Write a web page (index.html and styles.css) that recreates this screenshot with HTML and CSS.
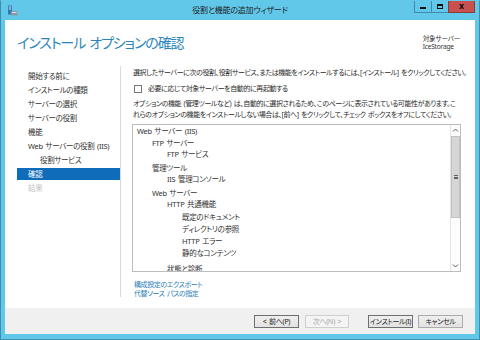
FILE: index.html
```html
<!DOCTYPE html>
<html lang="ja">
<head>
<meta charset="utf-8">
<title>役割と機能の追加ウィザード</title>
<link rel="stylesheet" href="styles.css">
</head>
<body>
<div class="window">
  <div class="titlebar">
    <div class="tb-left">
      <svg class="app-icon" width="11" height="11" viewBox="0 0 11 11">
        <rect x="1" y="0.5" width="4" height="9" fill="#2f78b8"/>
        <rect x="1.8" y="1.5" width="2.4" height="1" fill="#cfe4f5"/>
        <rect x="1.8" y="3.5" width="2.4" height="1" fill="#cfe4f5"/>
        <rect x="4" y="6" width="6.5" height="4.5" fill="#8a98a6"/>
        <rect x="5" y="7" width="4.5" height="1" fill="#dde3e8"/>
      </svg>
    </div>
    <div class="tb-title">役割と機能の追加ウィザード</div>
    <div class="tb-controls">
      <div class="ctl ctl-min"><span class="min-glyph"></span></div>
      <div class="ctl ctl-max"><span class="max-glyph"></span></div>
      <div class="ctl ctl-close"><span class="close-glyph">x</span></div>
    </div>
  </div>
  <div class="client">
    <div class="header">
      <h1 class="page-title">インストール オプションの確認</h1>
      <div class="target">
        <div>対象サーバー</div>
        <div>IceStorage</div>
      </div>
    </div>
    <div class="main">
      <nav class="nav">
        <div class="nav-item">開始する前に</div>
        <div class="nav-item">インストールの種類</div>
        <div class="nav-item">サーバーの選択</div>
        <div class="nav-item">サーバーの役割</div>
        <div class="nav-item">機能</div>
        <div class="nav-item">Web サーバーの役割 (IIS)</div>
        <div class="nav-item nav-sub">役割サービス</div>
        <div class="nav-item nav-active">確認</div>
        <div class="nav-item nav-disabled">結果</div>
      </nav>
      <section class="content">
        <p class="intro">選択したサーバーに次の役割、役割サービス、または機能をインストールするには、[インストール] をクリックしてください。</p>
        <label class="check-row"><span class="checkbox"></span><span>必要に応じて対象サーバーを自動的に再起動する</span></label>
        <p class="note">オプションの機能 (管理ツールなど) は、自動的に選択されるため、このページに表示されている可能性があります。これらのオプションの機能をインストールしない場合は、[前へ] をクリックして、チェック ボックスをオフにしてください。</p>
        <div class="listbox">
          <div class="list-items">
            <div class="li l1">Web サーバー (IIS)</div>
            <div class="li l2 first">FTP サーバー</div>
            <div class="li l3">FTP サービス</div>
            <div class="li l2">管理ツール</div>
            <div class="li l3">IIS 管理コンソール</div>
            <div class="li l2">Web サーバー</div>
            <div class="li l3">HTTP 共通機能</div>
            <div class="li l4">既定のドキュメント</div>
            <div class="li l4">ディレクトリの参照</div>
            <div class="li l4">HTTP エラー</div>
            <div class="li l4">静的なコンテンツ</div>
            <div class="li l3 last">状態と診断</div>
          </div>
          <div class="scrollbar">
            <div class="sb-arrow"><svg width="7" height="5" viewBox="0 0 7 5"><path d="M1 3.5 L3.5 1 L6 3.5" fill="none" stroke="#606060" stroke-width="1"/></svg></div>
            <div class="sb-thumb"><span class="grip"></span></div>
            <div class="sb-track"></div>
            <div class="sb-arrow"><svg width="7" height="5" viewBox="0 0 7 5"><path d="M1 1.5 L3.5 4 L6 1.5" fill="none" stroke="#606060" stroke-width="1"/></svg></div>
          </div>
        </div>
        <div class="links">
          <a class="link">構成設定のエクスポート</a>
          <a class="link">代替ソース パスの指定</a>
        </div>
      </section>
    </div>
    <div class="footer">
      <button class="btn btn-dark">&lt; 前へ(P)</button>
      <button class="btn btn-disabled">次へ(N) &gt;</button>
      <button class="btn btn-dark btn-gap">インストール(I)</button>
      <button class="btn">キャンセル</button>
    </div>
  </div>
</div>
</body>
</html>
```

FILE: styles.css
```css
* { box-sizing: border-box; }
html, body { margin: 0; padding: 0; }
body {
  width: 480px;
  height: 340px;
  overflow: hidden;
  font-family: "Noto Sans", "Noto Sans CJK JP", sans-serif;
  font-size: 7px;
  letter-spacing: -0.42px;
  word-spacing: 1px;
  color: #2b2b2b;
  font-feature-settings: "palt";
}
.window {
  width: 480px;
  height: 340px;
  background: #62c8e9;
  border: 1px solid #3e8fae;
  border-top-color: #62c8e9;
  padding: 0 4px 5px 4px;
  display: flex;
  flex-direction: column;
  overflow: hidden;
}
.titlebar {
  height: 18px;
  flex: none;
  display: grid;
  grid-template-columns: 1fr auto 1fr;
  align-items: start;
}
.tb-left { padding: 4px 0 0 2px; }
.app-icon { display: block; }
.tb-title {
  font-size: 8px;
  letter-spacing: -0.2px;
  line-height: 18px;
  color: #1b1b1b;
}
.tb-controls {
  display: flex;
  justify-content: flex-end;
  margin-right: -4px;
}
.ctl {
  height: 12px;
  display: flex;
  align-items: center;
  justify-content: center;
  border: 1px solid #3f8aa6;
  border-top: none;
}
.ctl-min { width: 17px; border-right: none; }
.ctl-max { width: 17px; border-right: none; }
.ctl-close { width: 27px; background: #c75050; border-color: #8b3a3a; margin-right: 4px; }
.min-glyph { width: 6px; height: 2px; background: #111; margin-top: 3px; }
.max-glyph { width: 6px; height: 5px; border: 1px solid #111; border-top-width: 2px; }
.close-glyph { font-family: "DejaVu Sans", sans-serif; font-weight: bold; font-size: 8px; line-height: 8px; letter-spacing: 0; color: #111; }
.client {
  flex: 1;
  min-height: 0;
  background: #ffffff;
  display: flex;
  flex-direction: column;
  margin-top: 1px;
}
.header {
  height: 41px;
  flex: none;
  display: flex;
  justify-content: space-between;
  padding: 13px 17px 0 12px;
}
.page-title {
  margin: 0;
  font-size: 14px;
  line-height: 20px;
  font-weight: normal;
  color: #2a86b9;
  letter-spacing: -1.1px;
  word-spacing: 1.5px;
}
.target {
  font-size: 6.6px;
  letter-spacing: -0.2px;
  line-height: 8px;
  color: #333;
  padding-top: 2px;
  margin-right: -2px;
}
.main {
  flex: 1;
  min-height: 0;
  display: flex;
  padding: 5px 0 11px 0;
  overflow: hidden;
}
.nav {
  width: 116px;
  flex: none;
  border-right: 1px solid #dadada;
  padding: 4px 0 0 12px;
  display: flex;
  flex-direction: column;
  gap: 2px;
  font-size: 7.5px;
  letter-spacing: -0.3px;
}
.nav-item {
  height: 12px;
  line-height: 12px;
  padding-left: 11px;
  color: #333;
  white-space: nowrap;
}
.nav-sub { padding-left: 23px; }
.nav-active { background: #0e6cbb; color: #fff; }
.nav-disabled { color: #c2c2c2; }
.content {
  flex: 1;
  padding: 2px 14px 0 11px;
  display: flex;
  flex-direction: column;
  min-width: 0;
}
.intro {
  margin: 0 0 0 1px;
  line-height: 10px;
  white-space: nowrap;
}
.check-row {
  display: flex;
  align-items: center;
  gap: 6px;
  margin: 6px 0 0 2px;
  height: 10px;
  line-height: 10px;
}
.checkbox {
  width: 8px;
  height: 8px;
  border: 1px solid #777;
  background: #fff;
}
.note {
  margin: 4px 0 0 1px;
  line-height: 11px;
}
.listbox {
  margin-top: 4px;
  height: 148px;
  flex: none;
  border: 1px solid #bcbcbc;
  display: flex;
  overflow: hidden;
}
.list-items {
  flex: 1;
  padding: 1px 0 0 4px;
  overflow: hidden;
  font-size: 7.5px;
  letter-spacing: -0.3px;
}
.li { line-height: 11.5px; white-space: nowrap; color: #333; }
.l2 { padding-left: 15px; margin-top: 2px; }
.l2.first { margin-top: 0; }
.l3 { padding-left: 30px; }
.l4 { padding-left: 45px; line-height: 12px; }
.l3.last { margin-top: 5px; }
.scrollbar {
  width: 10px;
  display: flex;
  flex-direction: column;
  background: #fdfdfd;
  border-left: 1px solid #e4e4e4;
}
.sb-arrow {
  height: 11px;
  display: flex;
  align-items: center;
  justify-content: center;
}
.sb-thumb {
  height: 82px;
  background: #d6d6d6;
  border: 1px solid #c2c2c2;
  display: flex;
  align-items: center;
  justify-content: center;
}
.grip {
  width: 4px;
  height: 4px;
  border-top: 1px solid #606060;
  border-bottom: 1px solid #606060;
  background: linear-gradient(#606060, #606060) center / 4px 1px no-repeat;
}
.sb-track { flex: 1; }
.links {
  margin-top: 8px;
  display: flex;
  flex-direction: column;
}
.link {
  color: #2a7db6;
  line-height: 9px;
  margin-left: 2px;
}
.footer {
  height: 26px;
  flex: none;
  background: #f0f0f0;
  display: flex;
  justify-content: flex-end;
  align-items: flex-start;
  padding: 7px 12px 0 0;
  gap: 5px;
}
.btn {
  width: 45px;
  height: 13px;
  padding: 0;
  font-family: inherit;
  font-size: 7px;
  letter-spacing: -0.3px;
  word-spacing: 1px;
  line-height: 11px;
  color: #222;
  background: linear-gradient(#efefef, #e2e2e2);
  border: 1px solid #acacac;
  font-feature-settings: "palt";
  white-space: nowrap;
}
.btn-dark { border-color: #6f6f6f; }
.btn-disabled { color: #a8a8a8; border-color: #cfcfcf; background: #f4f4f4; width: 44px; margin-left: 1px; }
.btn-gap { margin-left: 14px; }
```
